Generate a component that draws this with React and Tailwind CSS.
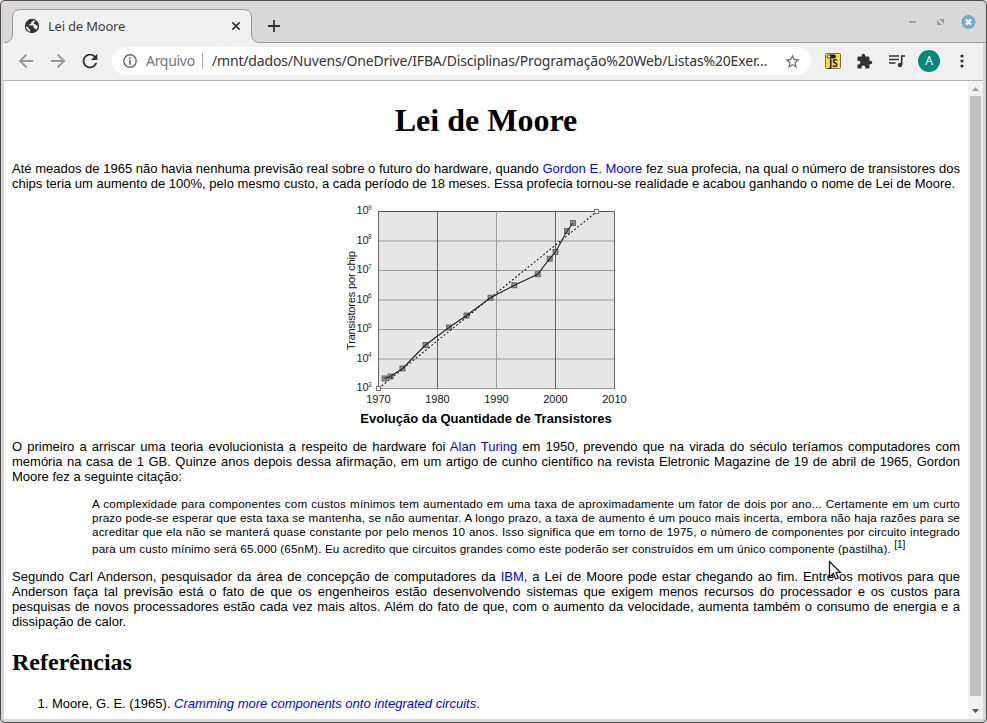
import React from "react";

const points = [
  [48.5, 176.5], [54.5, 174.5], [66.5, 166.5], [89.5, 143], [113, 125.5],
  [130.5, 113.5], [154.5, 95.7], [178.3, 83.3], [201.7, 72.3], [213.7, 56.7],
  [219.5, 50], [231, 29], [237, 21],
];
const exponents = [9, 8, 7, 6, 5, 4, 3];
const years = [1970, 1980, 1990, 2000, 2010];

function Chart() {
  return (
    <svg width="300" height="204" viewBox="0 0 300 204" className="block font-['Liberation_Sans',sans-serif]">
      <rect x="42.5" y="9.5" width="236" height="177" fill="#e6e6e6" />
      {exponents.map((e, i) => (
        <g key={e}>
          <line x1="42" x2="279" y1={9.5 + i * 29.5} y2={9.5 + i * 29.5} stroke={i === 0 ? "#555" : "#999"} />
          <text x="20.5" y={12 + i * 29.5} fontSize="11" fill="#222">10</text>
          <text x="32" y={7.5 + i * 29.5} fontSize="6.5" fill="#333">{e}</text>
        </g>
      ))}
      {years.map((y, i) => (
        <g key={y}>
          <line y1="9" y2="187" x1={42.5 + i * 59} x2={42.5 + i * 59} stroke={i === 2 ? "#9c9c9c" : "#666"} />
          <text x={42.5 + i * 59} y="200.5" fontSize="11" textAnchor="middle" fill="#111">{y}</text>
        </g>
      ))}
      <text transform="translate(19 148) rotate(-90)" fontSize="11" textLength="99" fill="#111">Transistores por chip</text>
      {points.map(([x, y]) => (
        <rect key={x} x={x - 2.5} y={y - 2.5} width="5" height="5" fill="#8f8f8f" stroke="#555" strokeWidth=".8" />
      ))}
      <line x1="42.5" y1="186.5" x2="261" y2="9.5" stroke="#222" strokeWidth="1.1" strokeDasharray="2 2" />
      <polyline points={points.map((p) => p.join(",")).join(" ")} fill="none" stroke="#222" strokeWidth="1.1" />
      <rect x="40.5" y="184.5" width="4" height="4" fill="#fff" stroke="#777" />
      <rect x="258.5" y="7.5" width="4" height="4" fill="#fff" stroke="#777" />
    </svg>
  );
}

function TabStrip() {
  return (
    <div className="relative flex h-[40px] shrink-0 bg-[#d9d9d9] font-['Noto_Sans',sans-serif]">
      <svg className="absolute inset-0" width="983" height="40">
        <path d="M0 39.500H1Q9.500 39.500 9.500 31V14.500Q9.500 6.500 17.500 6.500H240.500Q248.500 6.500 248.500 14.500V31Q248.500 39.500 257 39.500H983V40H0Z" fill="#f0f0f0" />
        <path d="M1 39.500Q9.500 39.500 9.500 31V14.500Q9.500 6.500 17.500 6.500H240.500Q248.500 6.500 248.500 14.500V31Q248.500 39.500 257 39.500H983" fill="none" stroke="#999" />
      </svg>
      <div className="relative flex w-full items-center pl-[21px] pt-[6px]">
        <svg width="16" height="16" viewBox="0 0 16 16">
          <circle cx="8" cy="8" r="7.2" fill="#303134" />
          <path d="M8.800 2.300Q9 3.800 7.300 4.100V5.500L5.300 6.200V7.600H8.700Q9.700 7.600 9.700 9V10.200H11.200L12 12Q14 10.200 13.900 7.600L12 7.400L11.300 6.100H9.900V4.600L11.600 3.200Q10.500 2.300 8.800 2.300ZM2.100 8.700Q2.600 12.400 6.200 13.700V11.800L4.900 10.900V9.700L2.100 7.900Z" fill="#f0f0f0" />
        </svg>
        <span className="ml-[8px] w-[184px] whitespace-nowrap text-[13px] leading-4 tracking-[-0.2px] text-[#3c4043]">Lei de Moore</span>
        <svg width="10" height="10" viewBox="0 0 10 10" className="ml-[-1px]"><path d="M1.300 1.300L8.700 8.700M8.700 1.300L1.300 8.700" stroke="#333" strokeWidth="1.700" /></svg>
        <svg width="12" height="12" viewBox="0 0 12 12" className="ml-[27px]"><path d="M6 0V12M0 6H12" stroke="#333" strokeWidth="1.800" /></svg>
      </div>
      <svg className="absolute right-[6px] top-[8px]" width="72" height="22" viewBox="0 0 72 22">
        <path d="M4 11H11" stroke="#8b8e99" strokeWidth="1.600" />
        <path d="M34 8H39V13ZM32 9V14H37Z" fill="#9a9ca4" />
        <circle cx="63.500" cy="11" r="7" fill="#6aaed6" />
        <path d="M61 8.500L66 13.500M66 8.500L61 13.500" stroke="#fff" strokeWidth="2.400" />
      </svg>
    </div>
  );
}

function Toolbar() {
  return (
    <div className="flex h-[38px] shrink-0 items-center border-b border-[#b4b4b4] bg-[#f0f0f0] pb-px font-['Noto_Sans',sans-serif]">
      <svg width="16" height="16" viewBox="0 0 16 16" className="ml-[15px]"><path d="M15 8H2.500M8.500 1.500L2 8L8.500 14.500" fill="none" stroke="#999" strokeWidth="1.900" /></svg>
      <svg width="16" height="16" viewBox="0 0 16 16" className="ml-[16px]"><path d="M1 8H13.500M7.500 1.500L14 8L7.500 14.500" fill="none" stroke="#999" strokeWidth="1.900" /></svg>
      <svg width="22" height="22" viewBox="0 0 24 24" className="ml-[13px]"><path d="M17.650 6.350A7.958 7.958 0 0 0 12 4c-4.420 0-7.990 3.580-7.990 8s3.570 8 7.990 8c3.730 0 6.840-2.550 7.730-6h-2.080A5.990 5.990 0 0 1 12 18c-3.310 0-6-2.690-6-6s2.690-6 6-6c1.660 0 3.140.69 4.220 1.780L13 11h7V4l-2.350 2.350z" fill="#333" /></svg>
      <div className="ml-[11px] flex h-7 w-[699px] items-center rounded-full bg-white pl-[11px] text-[14px]">
        <svg width="14" height="14" viewBox="0 0 14 14"><circle cx="7" cy="7" r="6.200" fill="none" stroke="#666" strokeWidth="1.400" /><path d="M7 3.300V4.900M7 6V10.700" stroke="#666" strokeWidth="1.600" /></svg>
        <span className="ml-[9px] w-[50px] pb-px tracking-[-0.3px] text-[#72767a]">Arquivo</span>
        <span className="ml-[6px] h-4 w-px bg-[#aaa]" />
        <span className="ml-[9px] w-[556px] whitespace-nowrap pb-px tracking-[-0.170px] text-[#333]">/mnt/dados/Nuvens/OneDrive/IFBA/Disciplinas/Programação%20Web/Listas%20Exer…</span>
        <svg width="17" height="17" viewBox="0 0 24 24" className="ml-[16px]"><path d="M22 9.240l-7.190-.62L12 2 9.190 8.630 2 9.240l5.460 4.730L5.820 21 12 17.270 18.180 21l-1.630-7.030L22 9.240zM12 15.400l-3.760 2.270 1-4.280-3.320-2.880 4.380-.38L12 6.100l1.710 4.040 4.380.38-3.320 2.880 1 4.280L12 15.400z" fill="#666" /></svg>
      </div>
      <svg width="16" height="16" viewBox="0 0 16 16" className="ml-[14px] font-['Noto_Sans',sans-serif]">
        <rect x=".5" y=".5" width="15" height="15" rx="1" fill="#f5de4b" stroke="#777042" />
        <rect x="2" y="1.500" width="9" height="4" rx="2" fill="#222" />
        <circle cx="4" cy="3.500" r="1.200" fill="#eee" />
        <text x="4" y="14" fontSize="10" fontWeight="700" fill="#222">JS</text>
      </svg>
      <svg width="17" height="17" viewBox="0 0 24 24" className="ml-[15px] mr-px"><path d="M20.500 11H19V7c0-1.100-.9-2-2-2h-4V3.500a2.500 2.500 0 0 0-5 0V5H4c-1.100 0-1.990.9-1.990 2v3.800H3.500c1.490 0 2.700 1.210 2.700 2.700s-1.210 2.700-2.700 2.700H2V20c0 1.100.9 2 2 2h3.800v-1.500c0-1.490 1.210-2.700 2.700-2.700s2.700 1.210 2.700 2.700V22H17c1.100 0 2-.9 2-2v-4h1.500a2.500 2.500 0 0 0 0-5z" fill="#333" /></svg>
      <svg width="16" height="14" viewBox="0 0 16 14" className="ml-[15px]"><path d="M0 2H10M0 5.500H10M0 9H6.500" stroke="#333" strokeWidth="1.600" /><path d="M12.700 11V2H16" fill="none" stroke="#333" strokeWidth="1.600" /><circle cx="11" cy="11" r="2.200" fill="#333" /></svg>
      <div className="ml-[13px] flex h-[22px] w-[22px] items-center justify-center rounded-full bg-[#00897b] text-[12px] leading-none text-white">A</div>
      <svg width="4" height="14" viewBox="0 0 4 14" className="ml-[20px]"><circle cx="2" cy="2" r="1.600" fill="#333" /><circle cx="2" cy="7" r="1.600" fill="#333" /><circle cx="2" cy="12" r="1.600" fill="#333" /></svg>
    </div>
  );
}

const Link = ({ children }) => <a className="text-[#0000ff]">{children}</a>;

export default function App() {
  return (
    <div className="h-[723px] w-[987px] overflow-hidden bg-[#d8d8d8]">
      <div className="relative flex h-[723px] flex-col overflow-hidden rounded-[5px] border border-[#4b4b4b] bg-[#d9d6d5] pb-[3px] pl-[2px] pr-[3px] pt-[2px]">
        <TabStrip />
        <Toolbar />
        <div className="ml-px flex min-h-0 flex-1 bg-white">
          <main className="w-[964px] px-2 font-['Liberation_Sans',sans-serif] text-[13px] leading-[15px] text-black">
            <h1 className="mt-[21px] text-center font-['Liberation_Serif',serif] text-[32px] font-bold leading-[37px]">Lei de Moore</h1>
            <p className="mt-[22px] text-justify">
              Até meados de 1965 não havia nenhuma previsão real sobre o futuro do hardware, quando <Link>Gordon E. Moore</Link> fez sua profecia, na qual o número de transistores dos chips teria um aumento de 100%, pelo mesmo custo, a cada período de 18 meses. Essa profecia tornou-se realidade e acabou ganhando o nome de Lei de Moore.
            </p>
            <figure className="mt-[11px] flex flex-col items-center">
              <Chart />
              <figcaption className="mt-[5px] font-bold">Evolução da Quantidade de Transistores</figcaption>
            </figure>
            <p className="mt-[13px] text-justify">
              O primeiro a arriscar uma teoria evolucionista a respeito de hardware foi <Link>Alan Turing</Link> em 1950, prevendo que na virada do século teríamos computadores com memória na casa de 1 GB. Quinze anos depois dessa afirmação, em um artigo de cunho científico na revista Eletronic Magazine de 19 de abril de 1965, Gordon Moore fez a seguinte citação:
            </p>
            <blockquote className="ml-20 mt-[13px] h-[59px] text-justify text-[11.700px] leading-[14px] tracking-[0.135px]">
              A complexidade para componentes com custos mínimos tem aumentado em uma taxa de aproximadamente um fator de dois por ano... Certamente em um curto prazo pode-se esperar que esta taxa se mantenha, se não aumentar. A longo prazo, a taxa de aumento é um pouco mais incerta, embora não haja razões para se acreditar que ela não se manterá quase constante por pelo menos 10 anos. Isso significa que em torno de 1975, o número de componentes por circuito integrado para um custo mínimo será 65.000 (65nM). Eu acredito que circuitos grandes como este poderão ser construídos em um único componente (pastilha). <sup className="top-0 align-super text-[10px] leading-[11px] tracking-normal">[1]</sup>
            </blockquote>
            <p className="mt-[13px] text-justify">
              Segundo Carl Anderson, pesquisador da área de concepção de computadores da <Link>IBM</Link>, a Lei de Moore pode estar chegando ao fim. Entre os motivos para que Anderson faça tal previsão está o fato de que os engenheiros estão desenvolvendo sistemas que exigem menos recursos do processador e os custos para pesquisas de novos processadores estão cada vez mais altos. Além do fato de que, com o aumento da velocidade, aumenta também o consumo de energia e a dissipação de calor.
            </p>
            <h2 className="mt-[20px] font-['Liberation_Serif',serif] text-[24px] font-bold leading-[27px]">Referências</h2>
            <ol className="mt-5 list-decimal pl-10">
              <li>Moore, G. E. (1965). <i><Link>Cramming more components onto integrated circuits</Link></i>.</li>
            </ol>
          </main>
          <div className="flex w-[15px] flex-col items-center bg-[#f1f1f1]">
            <svg width="15" height="15" className="shrink-0"><path d="M4 10L7.500 6L11 10Z" fill="#a3a3a3" /></svg>
            <div className="w-[11px] flex-1 bg-[#c1c1c1]" />
            <svg width="15" height="23" className="shrink-0"><path d="M4 13H11L7.500 17Z" fill="#505050" /></svg>
          </div>
        </div>
        <svg className="absolute left-[827px] top-[559px]" width="16" height="22" viewBox="0 0 16 22"><path d="M1.500 1.500V17L5.300 13.500L7.700 19L10.300 18L8 12.500H12.500Z" fill="#fff" stroke="#111" strokeWidth="1.200" /></svg>
      </div>
    </div>
  );
}
